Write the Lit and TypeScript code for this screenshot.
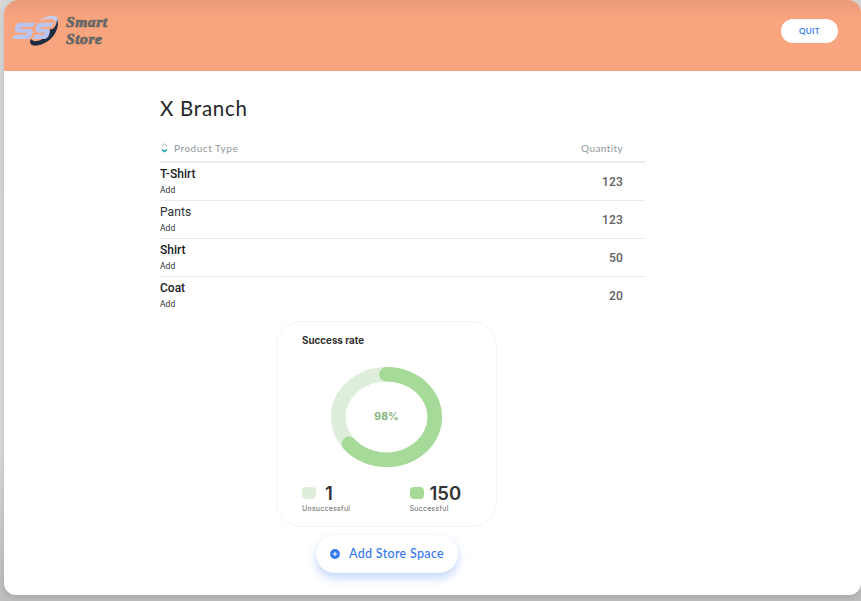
import { LitElement, html, css } from "lit";
import { customElement } from "lit/decorators.js";
import { classMap } from "lit/directives/class-map.js";

const products = [
  { name: "T-Shirt", quantity: 123, strong: true },
  { name: "Pants", quantity: 123, strong: false },
  { name: "Shirt", quantity: 50, strong: true },
  { name: "Coat", quantity: 20, strong: true },
];

@customElement("store-logo")
class StoreLogo extends LitElement {
  static styles = css`
    :host { display: flex; align-items: flex-start; }
    svg { display: block; width: 48px; height: 32px; margin-top: 1px; }
    .name {
      margin: 1px 0 0 6px;
      font: italic 900 14px/16.5px "Liberation Serif", serif;
      letter-spacing: 0.5px;
      color: #666764;
      -webkit-text-stroke: 0.7px #666764;
      transform: scaleX(1.11);
      transform-origin: left;
    }
    .name span { display: block; }
  `;
  render() {
    return html`
      <svg viewBox="36 45 144 96" aria-hidden="true">
        <path fill="#c8cce8" d="M120 62C137 48 163 43 172 52C178 59 172 75 162 89C169 73 169 63 161 59C152 55 137 57 120 62Z" />
        <path fill="#1f2c42" d="M171 58C180 78 165 110 143 124C123 138 94 142 91 129C89 123 91 119 95 118C98 125 110 125 123 119C135 114 143 108 143 102C141 93 149 87 158 87C166 82 170 72 171 58Z" />
        <path fill="#b9c5ef" d="M61 68H107L99 81H69Q61 81 60 87H86Q101 87 98 99Q94 117 79 117H36L45 104H75Q82 104 83 98H57Q42 98 45 84Q48 68 61 68Z" />
        <path fill="#b9c5ef" d="M123 68H162L154 81H130Q122 81 121 87H139Q153 87 149 99Q145 117 131 117H97L106 104H127Q134 104 135 98H118Q104 98 107 84Q110 68 123 68Z" />
      </svg>
      <div class="name"><span>Smart</span><span>Store</span></div>
    `;
  }
}

@customElement("product-table")
class ProductTable extends LitElement {
  static styles = css`
    :host { display: block; width: 485px; }
    .head {
      display: flex; align-items: center; box-sizing: border-box;
      height: 27px; padding: 0 22px 1px 0; border-bottom: 2px solid #eceded;
      font: 10px/14px Lato, sans-serif; letter-spacing: 0.53px; color: #90979c;
    }
    .head span:last-child { letter-spacing: 0.4px; }
    svg { width: 7px; height: 10px; margin: 1px 6px 0 1px; }
    .grow { flex: 1; }
    .row {
      display: flex; align-items: center; justify-content: space-between; box-sizing: border-box;
      height: 38px; padding-right: 22px; border-bottom: 1px solid #e9eaea;
      font-family: Roboto, sans-serif;
    }
    .row:last-child { border-bottom-color: transparent; }
    .name { font-size: 12px; line-height: 16px; color: #2c2d2f; letter-spacing: 0.1px; margin-top: -1px; }
    .strong { font-weight: 500; color: #202124; letter-spacing: 0; }
    .add { font-size: 8.5px; line-height: 12px; color: #303133; margin-top: 2px; letter-spacing: 0.05px; }
    .quantity { font-size: 12px; font-weight: 500; line-height: 16px; color: #5c6064; letter-spacing: 0.15px; margin-top: 2px; }
    .row:last-child .quantity { margin-top: 1px; }
  `;
  render() {
    return html`
      <div class="head">
        <svg viewBox="0 0 7 10" fill="none" aria-hidden="true">
          <path d="M1 3L3.5 .9L6 3" stroke="#a5adaf" />
          <path d="M1 6.5L3.5 8.5L6 6.5" stroke="#10a2a5" stroke-width="1.6" />
        </svg>
        <span class="grow">Product Type</span><span>Quantity</span>
      </div>
      ${products.map((p) => html`
        <div class="row">
          <div>
            <div class=${classMap({ name: true, strong: p.strong })}>${p.name}</div>
            <div class="add">Add</div>
          </div>
          <div class="quantity">${p.quantity}</div>
        </div>`)}
    `;
  }
}

@customElement("success-card")
class SuccessCard extends LitElement {
  static styles = css`
    :host {
      display: block; box-sizing: border-box; width: 221px; height: 206px;
      padding: 12px 25px 0; border: 1px solid #f4f4f4; border-radius: 25px;
      font-family: Inter, "Liberation Sans", sans-serif;
    }
    .title { font-size: 9.8px; font-weight: 700; line-height: 14px; color: #303030; letter-spacing: 0; }
    .ring { display: grid; place-items: center; width: 111px; height: 100px; margin: 19px 0 0 29px; }
    .ring > * { grid-area: 1 / 1; }
    .ring svg { display: block; }
    .percent { font-size: 10.5px; font-weight: 700; color: #83b377; }
    .legend { display: flex; margin-top: 16px; }
    .item { flex: none; width: 107.5px; }
    .line { display: flex; align-items: center; height: 20px; }
    .swatch { width: 14px; height: 12px; border-radius: 4px; background: #deeeda; }
    .good { background: #a6da98; }
    .value {
      margin-left: 9px; font-size: 18.5px; line-height: 20px; font-weight: 600; color: #343434;
    }
    .good + .value { margin-left: 6px; letter-spacing: 0; }
    .label { font-size: 7px; line-height: 10px; color: #5f5f5f; margin-top: 1px; letter-spacing: 0.27px; white-space: nowrap; }
  `;
  render() {
    return html`
      <div class="title">Success rate</div>
      <div class="ring">
        <svg width="111" height="100" viewBox="0 0 111 100" fill="none" aria-hidden="true">
          <ellipse cx="55.5" cy="50" rx="48.2" ry="42.7" stroke="#deeeda" stroke-width="14.6" />
          <path d="M55.5 7.3A48.2 42.7 0 1 1 18 76.8" stroke="#a6da98" stroke-width="14.6" stroke-linecap="round" />
        </svg>
        <span class="percent">98%</span>
      </div>
      <div class="legend">
        <div class="item">
          <div class="line"><span class="swatch"></span><span class="value">1</span></div>
          <div class="label">Unsuccessful</div>
        </div>
        <div class="item">
          <div class="line"><span class="swatch good"></span><span class="value">150</span></div>
          <div class="label">Successful</div>
        </div>
      </div>
    `;
  }
}

@customElement("app-root")
class AppRoot extends LitElement {
  static styles = css`
    :host {
      display: block; box-sizing: border-box; width: 861px; height: 601px;
      padding: 0 0 6px 4px; overflow: hidden;
      background: linear-gradient(#d8d8d8, #dedede 75%, #bfbfbf);
    }
    .window {
      height: 595px; border-radius: 15px 13px 12px 12px; overflow: hidden; background: #fff;
      box-shadow: 0 2px 8px rgba(0, 0, 0, 0.16);
    }
    header {
      display: flex; justify-content: space-between; box-sizing: border-box; height: 71.4px;
      padding: 14px 23px 0 8px;
      background: linear-gradient(rgba(215, 145, 115, 0.5), rgba(248, 164, 126, 0) 18px), #f8a47e;
    }
    button { font-family: inherit; border: 0; padding: 0; background: #fff; }
    .quit {
      width: 57px; height: 24px; margin-top: 5px; border-radius: 12px;
      font: 700 8px/24px Lato, sans-serif; letter-spacing: 0.3px; color: #3b80ef;
    }
    main { padding: 22.6px 0 0 156px; }
    h1 { margin: 0 0 14px; font: 400 20.5px/28px Lato, sans-serif; letter-spacing: 0.75px; color: #252628; }
    success-card { margin: 6px 0 0 116px; }
    .add {
      display: flex; align-items: center; width: 142px; height: 38px; margin: 8px 0 0 156px;
      padding-left: 14px; box-sizing: border-box; border-radius: 19px;
      box-shadow: 0 5px 10px rgba(55, 120, 245, 0.3), 0 0 2px rgba(55, 120, 245, 0.05);
      font: 500 12.5px/20px Lato, sans-serif; letter-spacing: 0.32px; color: #3478f0; white-space: nowrap;
    }
    .add svg { width: 10px; height: 10px; margin: 1px 9px 0 0; }
  `;
  render() {
    return html`
      <div class="window">
        <header><store-logo></store-logo><button class="quit">QUIT</button></header>
        <main>
          <h1>X Branch</h1>
          <product-table></product-table>
          <success-card></success-card>
          <button class="add">
            <svg viewBox="0 0 10 10" aria-hidden="true"><circle cx="5" cy="5" r="4.9" fill="#3478f0" /><path d="M5 2.7V7.3M2.7 5H7.3" stroke="#fff" stroke-width="1.1" /></svg>
            <span>Add Store Space</span>
          </button>
        </main>
      </div>
    `;
  }
}
